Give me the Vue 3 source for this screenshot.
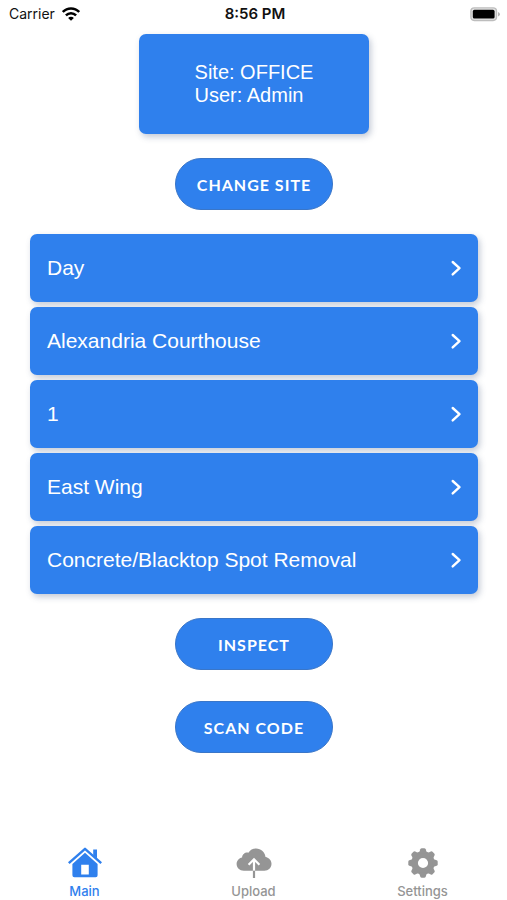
<script setup>
import { ref } from 'vue'

const rows = ['Day', 'Alexandria Courthouse', '1', 'East Wing', 'Concrete/Blacktop Spot Removal']
const teeth = [0, 45, 90, 135, 180, 225, 270, 315]
const tabs = ['Main', 'Upload', 'Settings']
const active = ref('Main')
</script>

<template>
  <div class="screen">
    <header class="status">
      <div class="carrier">
        <span>Carrier</span>
        <svg width="18" height="14" viewBox="0 0 18 14" aria-hidden="true">
          <g fill="none" stroke="#000" stroke-width="2.5">
            <path d="M0.8 5C5.3 0.3 12.7 0.3 17.2 5" />
            <path d="M3.9 8.4C6.8 5.5 11.2 5.5 14.1 8.4" />
          </g>
          <path d="M9 13.8L6.1 10.9C7.7 9.4 10.3 9.4 11.9 10.9Z" />
        </svg>
      </div>
      <time class="time">8:56 PM</time>
      <div class="battery">
        <svg width="31" height="15" viewBox="0 0 31 15" aria-hidden="true">
          <rect x="0.9" y="0.9" width="25.6" height="12.6" rx="3.4" fill="#e4e4e4" stroke="#bdbdbd" stroke-width="1.4" />
          <rect x="2.8" y="2.8" width="21.8" height="8.8" rx="1.6" />
          <path d="M28 4.9Q30 5.7 30 7.2T28 9.5Z" fill="#b5b5b5" />
        </svg>
      </div>
    </header>

    <main class="content">
      <section class="card">
        <p class="info">Site: OFFICE<br />User: Admin</p>
      </section>
      <button type="button" class="pill">CHANGE SITE</button>

      <div class="rows">
        <button v-for="row in rows" :key="row" type="button" class="row">
          <span>{{ row }}</span>
          <svg width="12" height="18" viewBox="0 0 12 18" aria-hidden="true">
            <path d="M2.7 3L9.5 9.2L2.7 15.4" fill="none" stroke="#fff" stroke-width="2.4" stroke-linecap="round" stroke-linejoin="round" />
          </svg>
        </button>
      </div>

      <div class="actions">
        <button type="button" class="pill">INSPECT</button>
        <button type="button" class="pill">SCAN CODE</button>
      </div>
    </main>

    <nav class="tabs">
      <button
        v-for="tab in tabs"
        :key="tab"
        type="button"
        class="tab"
        :class="{ active: tab === active }"
        @click="active = tab"
      >
        <svg v-if="tab === 'Main'" width="36" height="34" viewBox="0 0 36 34" aria-hidden="true">
          <path d="M1.8 17.2L18 2.8L34.2 17.2" fill="none" stroke="currentColor" stroke-width="2.4" stroke-linejoin="round" />
          <path d="M26.2 3.6H30V12.4L26.2 9Z" fill="currentColor" />
          <path fill-rule="evenodd" fill="currentColor" d="M18 6.8L30.6 18V29.2Q30.6 31.2 28.6 31.2H7.4Q5.4 31.2 5.4 29.2V18ZM14.2 18.8V28.6H21.8V18.8Z" />
        </svg>
        <svg v-else-if="tab === 'Upload'" width="36" height="34" viewBox="0 0 36 34" aria-hidden="true">
          <path fill="currentColor" d="M7.8 24.8C3.6 24.8 0.6 21.8 0.6 18.1C0.6 14.7 3 12.2 6.1 11.5C6.3 8.3 9.2 6.1 12.4 6.7C14 3.9 16.8 2.4 20 2.4C25.1 2.4 29.1 6 29.5 11C33.1 11.7 35.5 14.4 35.5 17.8C35.5 21.8 32.4 24.8 28.4 24.8Z" />
          <path d="M18 24.8V14M12.6 18.8L18 13.3L23.4 18.8" fill="none" stroke="#fff" stroke-width="2.2" />
          <path d="M18 24.8V32" stroke="currentColor" stroke-width="2.2" />
        </svg>
        <svg v-else width="36" height="34" viewBox="0 0 36 34" aria-hidden="true">
          <circle cx="18" cy="17" r="8.4" fill="none" stroke="currentColor" stroke-width="6.6" />
          <path
            v-for="angle in teeth"
            :key="angle"
            :transform="`rotate(${angle} 18 17)`"
            fill="currentColor"
            d="M14 7.2L15.3 3.3Q15.7 2.3 16.8 2.3H19.2Q20.3 2.3 20.7 3.3L22 7.2Z"
          />
        </svg>
        <span>{{ tab }}</span>
      </button>
    </nav>
  </div>
</template>

<style>
body {
  margin: 0;
  background: #fff;
}
</style>

<style scoped>
.screen {
  display: flex;
  flex-direction: column;
  min-height: 100vh;
  font-family: "Liberation Sans", Arial, sans-serif;
  background: #fff;
}

button {
  margin: 0;
  padding: 0;
  border: 0;
  cursor: pointer;
}

svg {
  display: block;
  flex: none;
}

.status {
  display: grid;
  grid-template-columns: 1fr auto 1fr;
  align-items: center;
  height: 28px;
  padding: 0 6px 0 9px;
  font-family: Inter, sans-serif;
  font-size: 14px;
  line-height: 18px;
  color: #111;
}

.carrier {
  display: flex;
  align-items: center;
  gap: 7px;
}

.time {
  font-size: 15px;
  font-weight: 600;
}

.battery {
  display: flex;
  justify-content: flex-end;
}

.content {
  display: flex;
  flex: 1;
  flex-direction: column;
  align-items: center;
  gap: 24px;
  padding: 6px 29px 24px 30px;
}

.card {
  display: flex;
  align-items: center;
  justify-content: center;
  width: 230px;
  height: 100px;
  border-radius: 7px;
  background: #2f80ed;
  box-shadow: 2px 3px 6px rgba(60, 80, 120, 0.3);
}

.info {
  margin: 0;
  font-size: 20px;
  line-height: 23px;
  color: #fff;
}

.pill {
  width: 158px;
  height: 52px;
  border: 1px solid #3a76c8;
  border-radius: 26px;
  background: #2f80ed;
  color: #fff;
  font-family: Lato, sans-serif;
  font-size: 16px;
  font-weight: 700;
  letter-spacing: 1px;
}

.rows {
  display: flex;
  flex-direction: column;
  align-self: stretch;
  gap: 5px;
}

.row {
  display: flex;
  align-items: center;
  justify-content: space-between;
  height: 68px;
  padding: 0 16px 0 17px;
  border-radius: 7px;
  background: #2f80ed;
  box-shadow: 2px 3px 6px rgba(60, 80, 120, 0.3);
  color: #fff;
  font-family: inherit;
  font-size: 21px;
  text-align: left;
}

.actions {
  display: flex;
  flex-direction: column;
  gap: 31px;
}

.tabs {
  display: grid;
  grid-template-columns: repeat(3, 1fr);
  padding-bottom: 1px;
}

.tab {
  display: flex;
  flex-direction: column;
  align-items: center;
  gap: 3px;
  background: none;
  color: #959595;
  font-family: Inter, sans-serif;
  font-size: 13px;
  font-weight: 500;
  line-height: 16px;
}

.tab.active {
  color: #2f80ed;
}
</style>
